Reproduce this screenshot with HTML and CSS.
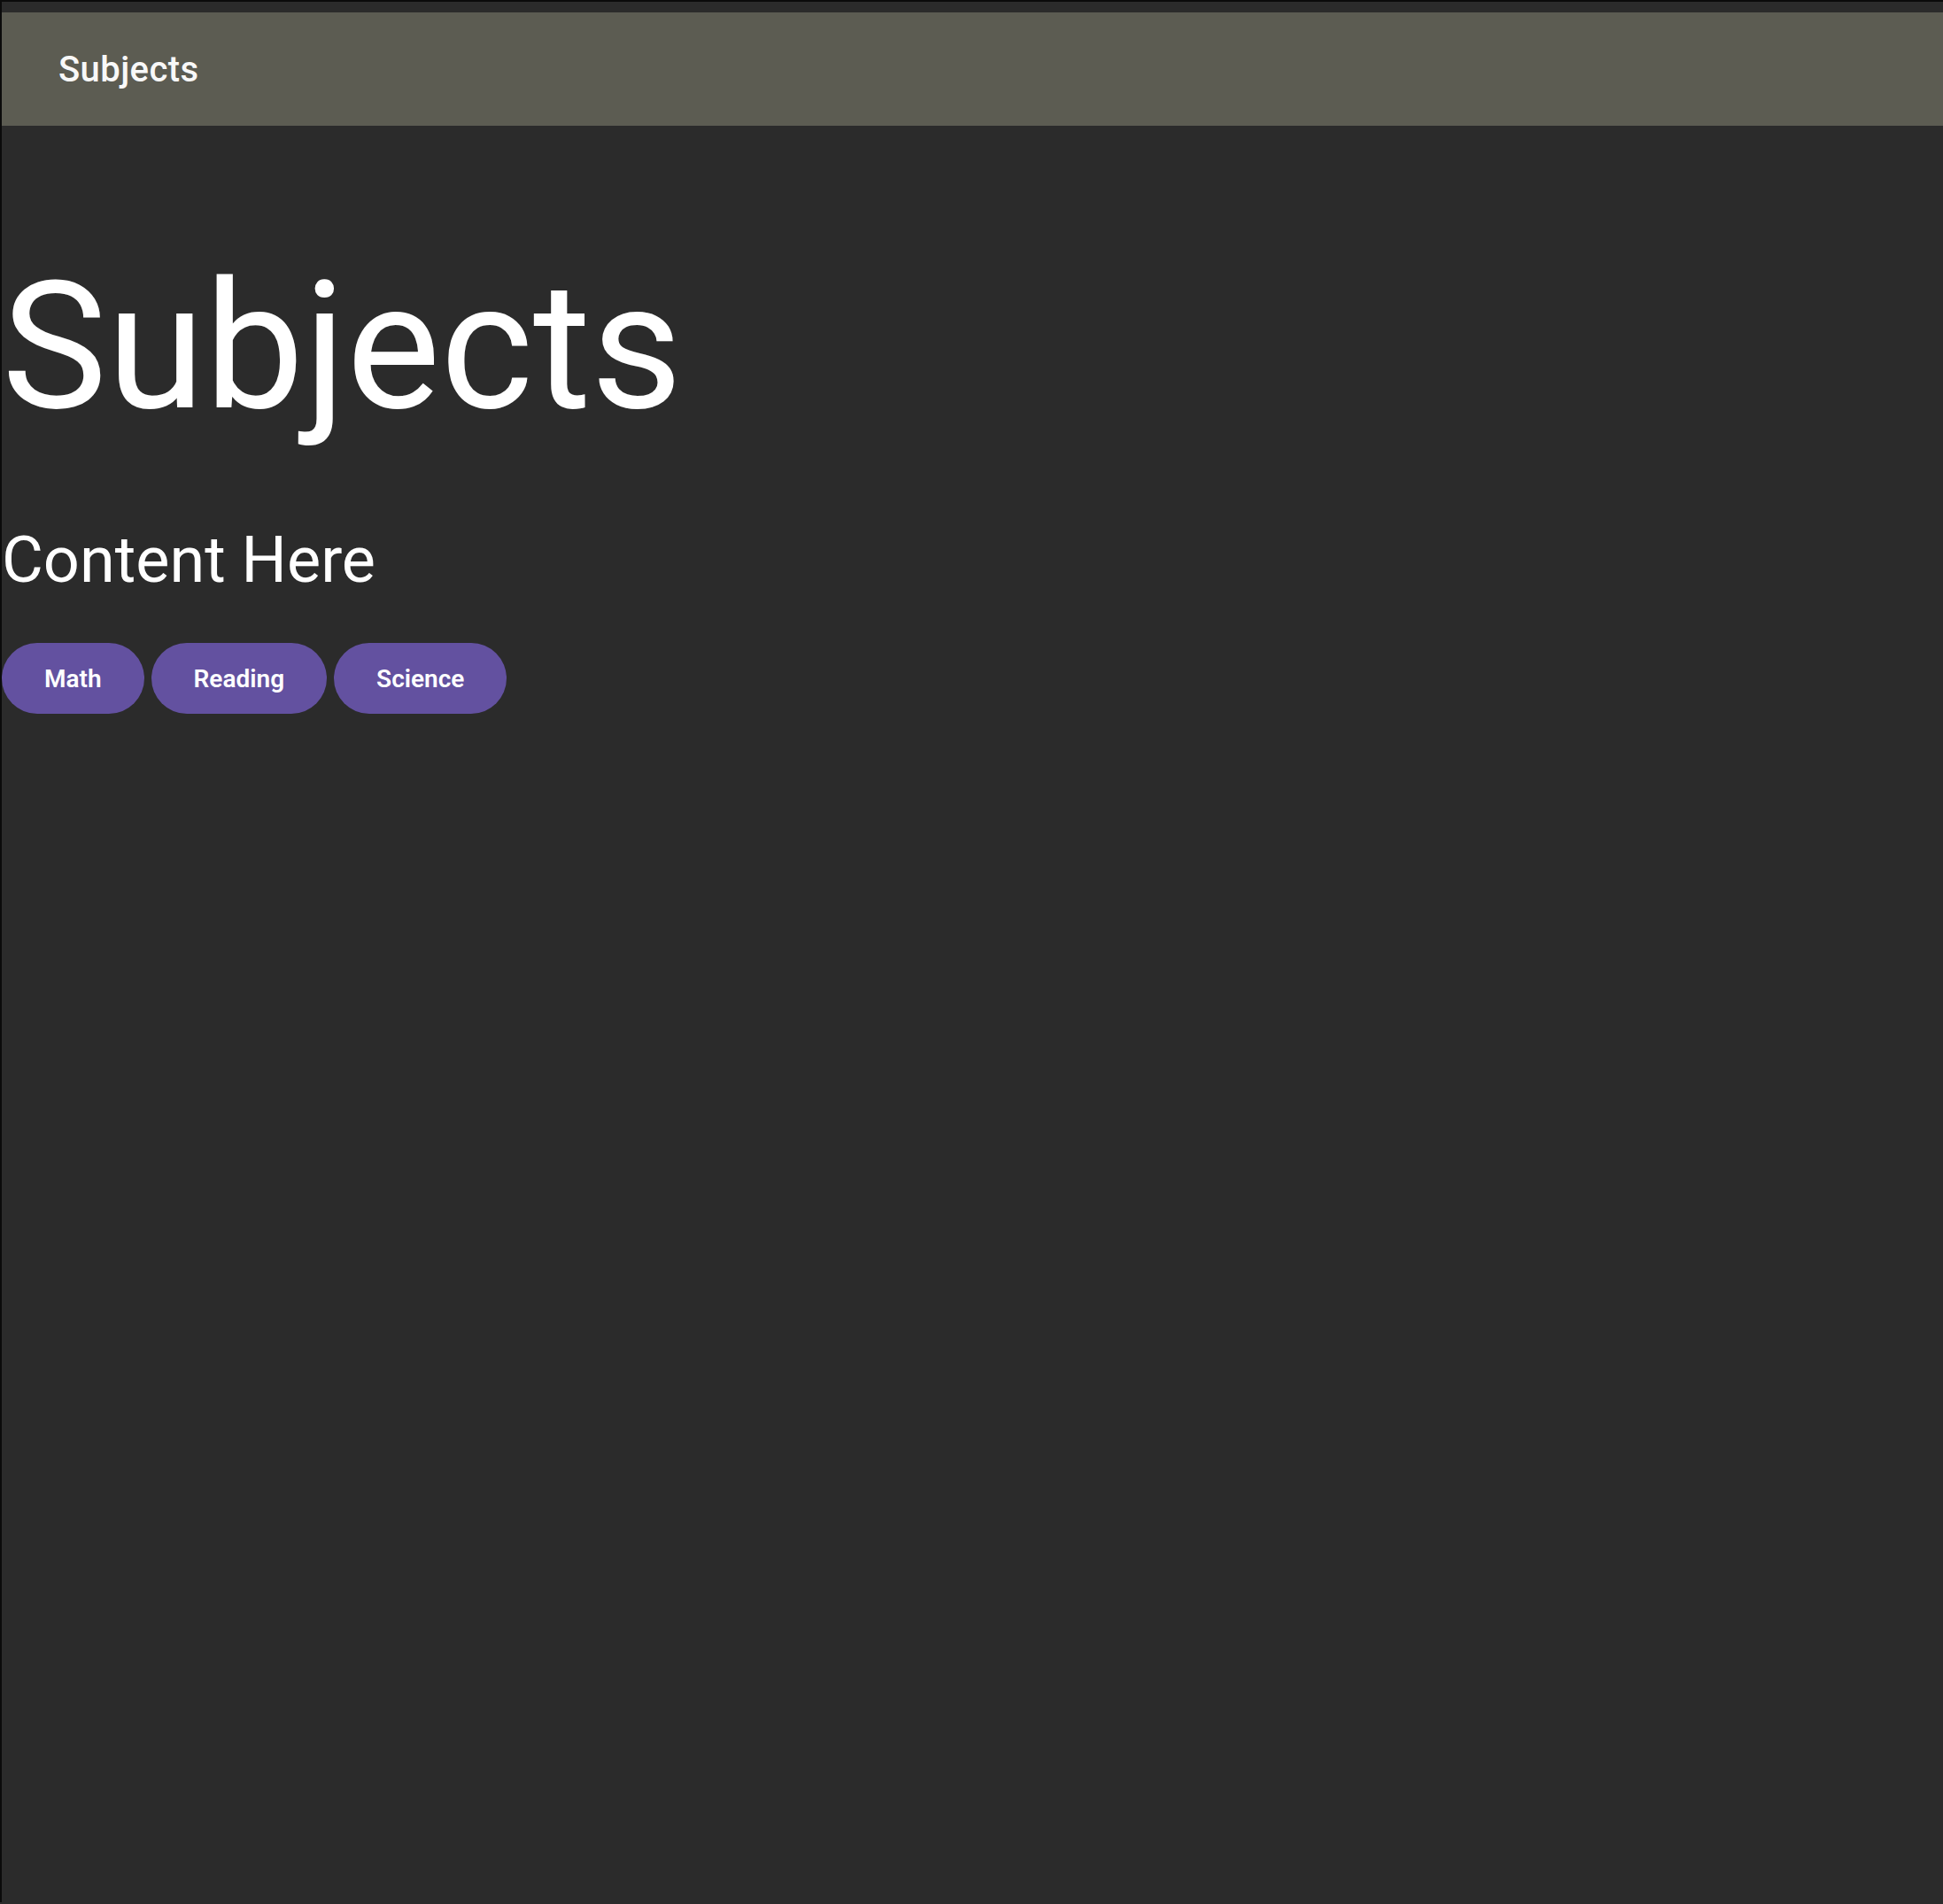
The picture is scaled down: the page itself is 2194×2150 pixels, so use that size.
FILE: index.html
```html
<!DOCTYPE html>
<html lang="en">
<head>
<meta charset="utf-8">
<title>Subjects</title>
<link rel="stylesheet" href="styles.css">
</head>
<body>
<div class="frame">
  <header class="app-bar">
    <span class="app-bar-title">Subjects</span>
  </header>
  <main class="content">
    <h1 class="display">Subjects</h1>
    <h2 class="headline">Content Here</h2>
    <div class="chips">
      <button class="pill">Math</button>
      <button class="pill">Reading</button>
      <button class="pill">Science</button>
    </div>
  </main>
</div>
</body>
</html>
```

FILE: styles.css
```css
html, body {
  margin: 0;
  padding: 0;
  background: #2b2b2b;
}

body {
  font-family: Roboto, "Noto Sans", "Liberation Sans", sans-serif;
  color: #ffffff;
}

.frame {
  min-height: 2148px;
  border-top: 2px solid #0b0b0b;
  border-left: 2px solid #0b0b0b;
  padding-top: 12px;
  box-sizing: border-box;
  background: #2b2b2b;
}

.app-bar {
  height: 128px;
  box-sizing: border-box;
  padding-top: 2px;
  background: #5c5c52;
  display: flex;
  align-items: center;
  padding-left: 64px;
}

.app-bar-title {
  font-size: 40px;
  font-weight: 500;
  line-height: 1;
  letter-spacing: 0.4px;
  color: #f8f8f8;
}

.content {
  display: flex;
  flex-direction: column;
  align-items: flex-start;
}

.display {
  margin: 150px 0 0 0;
  font-size: 200px;
  font-weight: 400;
  line-height: 200px;
  letter-spacing: 0;
}

.headline {
  margin: 98px 0 0 0;
  font-size: 72px;
  font-weight: 400;
  line-height: 86px;
}

.chips {
  display: flex;
  gap: 8px;
  margin-top: 50px;
}

.pill {
  height: 80px;
  padding: 0 48px;
  border: none;
  border-radius: 40px;
  background: #6351a0;
  color: #ffffff;
  font-family: Roboto, "Noto Sans", "Liberation Sans", sans-serif;
  font-size: 28px;
  font-weight: 600;
  cursor: pointer;
}
```
